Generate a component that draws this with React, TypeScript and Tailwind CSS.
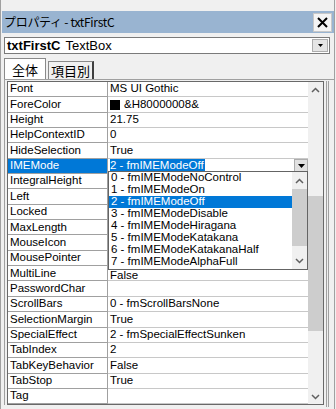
import React from 'react'

type Row = { name: string; value?: React.ReactNode }

// values of rows hidden by the open dropdown are left out
const rows: Row[] = [
  { name: 'Font', value: 'MS UI Gothic' },
  {
    name: 'ForeColor',
    value: (
      <span className="flex items-center gap-[4px]">
        <span className="inline-block w-[10px] h-[10px] bg-black" />
        <span>&amp;H80000008&amp;</span>
      </span>
    ),
  },
  { name: 'Height', value: '21.75' },
  { name: 'HelpContextID', value: '0' },
  { name: 'HideSelection', value: 'True' },
  { name: 'IMEMode' },
  { name: 'IntegralHeight' },
  { name: 'Left' },
  { name: 'Locked' },
  { name: 'MaxLength' },
  { name: 'MouseIcon' },
  { name: 'MousePointer' },
  { name: 'MultiLine', value: <span className="pt-[5px]">False</span> },
  { name: 'PasswordChar', value: '' },
  { name: 'ScrollBars', value: '0 - fmScrollBarsNone' },
  { name: 'SelectionMargin', value: 'True' },
  { name: 'SpecialEffect', value: '2 - fmSpecialEffectSunken' },
  { name: 'TabIndex', value: '2' },
  { name: 'TabKeyBehavior', value: 'False' },
  { name: 'TabStop', value: 'True' },
  { name: 'Tag', value: '' },
]

const listItems = [
  '0 - fmIMEModeNoControl',
  '1 - fmIMEModeOn',
  '2 - fmIMEModeOff',
  '3 - fmIMEModeDisable',
  '4 - fmIMEModeHiragana',
  '5 - fmIMEModeKatakana',
  '6 - fmIMEModeKatakanaHalf',
  '7 - fmIMEModeAlphaFull',
]

const Up = () => (
  <svg width="9" height="6" viewBox="0 0 9 6">
    <path d="M1 5 L4.5 1.5 L8 5" fill="none" stroke="#606060" strokeWidth="1.5" />
  </svg>
)
const Down = () => (
  <svg width="9" height="6" viewBox="0 0 9 6">
    <path d="M1 1 L4.5 4.5 L8 1" fill="none" stroke="#606060" strokeWidth="1.5" />
  </svg>
)
const Tri = () => (
  <svg width="7" height="4" viewBox="0 0 7 4">
    <path d="M0 0 H7 L3.5 4 Z" fill="#000" />
  </svg>
)

export default function App() {
  return (
    <div className="relative w-[336px] h-[409px] overflow-hidden bg-[#f0f0f0] font-['Liberation_Sans','Noto_Sans_CJK_JP',sans-serif] text-[11.5px] text-black leading-none">
      {/* window frame */}
      <div className="absolute inset-y-0 left-0 w-[1px] bg-[#a0a0a0]" />
      <div className="absolute inset-y-0 right-[1px] w-[1px] bg-[#a0a0a0]" />

      {/* strip above title */}
      <div className="h-[11px]" />

      {/* title bar */}
      <div className="mx-[2px] h-[22px] bg-[#99b4d1] flex items-center justify-between">
        <span className="pl-[2px] text-[12px] font-['Noto_Sans_CJK_JP',sans-serif] tracking-[-0.3px]">
          プロパティ - txtFirstC
        </span>
        <div className="mr-[2px] w-[19px] h-[19px] bg-[#f4f4f4] border border-[#c8c8c8] flex items-center justify-center">
          <svg width="11" height="11" viewBox="0 0 11 11">
            <path d="M1 1 L10 10 M10 1 L1 10" stroke="#000" strokeWidth="2" />
          </svg>
        </div>
      </div>

      {/* object combo */}
      <div className="mt-[4px] ml-[4px] mr-[6px] h-[17px] bg-white border border-[#7a7a7a] flex items-center">
        <span className="pl-[2px] font-bold text-[13px]">txtFirstC</span>
        <span className="pl-[5px] text-[13px]">TextBox</span>
        <div className="ml-auto mr-[1px] w-[16px] h-[13px] bg-[#e5e5e5] border border-[#adadad] flex items-center justify-center">
          <svg width="5" height="3" viewBox="0 0 5 3">
            <path d="M0 0 H5 L2.5 3 Z" fill="#000" />
          </svg>
        </div>
      </div>

      {/* tabs */}
      <div className="mt-[4px] ml-[4px] flex items-end h-[21px]">
        <div className="h-[21px] w-[42px] bg-white border border-b-0 border-[#8a8a8a] flex items-center justify-center text-[13px] font-['Noto_Sans_CJK_JP',sans-serif]">
          全体
        </div>
        <div className="ml-[2px] h-[18px] w-[46px] border border-b-0 border-[#8a8a8a] border-r-[2px] border-r-[#404040] flex items-center justify-center text-[13px] font-['Noto_Sans_CJK_JP',sans-serif]">
          項目別
        </div>
      </div>

      {/* grid panel */}
      <div className="ml-[4px] w-[330px] h-[326px] border-l border-t border-[#a0a0a0] pl-[2px] pt-[1px] flex">
        <div className="w-[317px] h-[324px] border border-[#696969] bg-white flex">
          <div className="w-[300px] flex flex-col">
            {rows.map((r) => {
              const sel = r.name === 'IMEMode'
              return (
                <div key={r.name} className="flex h-[15.35px] shrink-0">
                  <div
                    className={`w-[100px] pl-[2px] flex items-center border-r border-b border-[#a0a0a0] ${
                      sel ? 'bg-[#0078d7] text-white' : ''
                    }`}
                  >
                    {r.name}
                  </div>
                  <div className="flex-1 pl-[2px] flex items-center border-b border-[#c8c8c8] overflow-hidden">
                    {sel ? (
                      <>
                        <span className="bg-[#0078d7] text-white h-full flex items-center pr-[1px]">
                          2 - fmIMEModeOff
                        </span>
                        <div className="ml-auto w-[14px] h-full bg-[#e1e1e1] border border-[#adadad] flex items-center justify-center">
                          <Tri />
                        </div>
                      </>
                    ) : (
                      r.value
                    )}
                  </div>
                </div>
              )
            })}
          </div>
          {/* main scrollbar */}
          <div className="w-[15px] bg-[#f0f0f0] flex flex-col">
            <div className="h-[15px] flex items-center justify-center"><Up /></div>
            <div className="h-[99px]" />
            <div className="h-[135px] bg-[#cdcdcd]" />
            <div className="flex-1" />
            <div className="h-[15px] flex items-center justify-center"><Down /></div>
          </div>
        </div>
        <div className="ml-[2px] w-[3px] h-[326px] border-x border-[#a0a0a0]" />
      </div>

      {/* dropdown list */}
      <div className="absolute left-[108px] top-[171px] w-[200px] h-[99px] bg-white border border-[#646464] flex">
        <div className="flex-1 flex flex-col">
          {listItems.map((t, i) => (
            <div
              key={t}
              className={`h-[12px] pl-[2px] flex items-center ${i === 2 ? 'bg-[#0078d7] text-white' : ''}`}
            >
              {t}
            </div>
          ))}
        </div>
        <div className="w-[15px] bg-[#f0f0f0] flex flex-col">
          <div className="h-[17px] flex items-center justify-center"><Up /></div>
          <div className="h-[57px] bg-[#cdcdcd]" />
          <div className="flex-1" />
          <div className="h-[17px] flex items-center justify-center"><Down /></div>
        </div>
      </div>
    </div>
  )
}
